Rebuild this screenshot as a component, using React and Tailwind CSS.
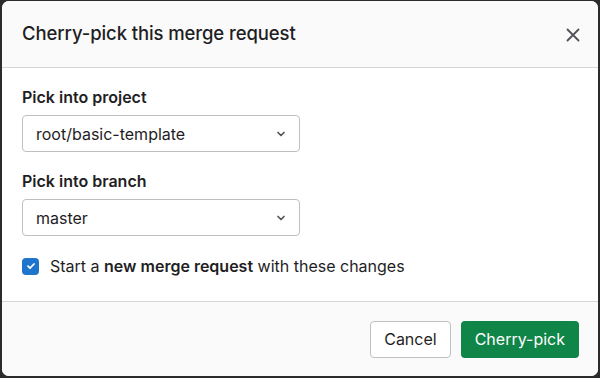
import React from 'react';

const Chevron = () => (
  <svg width="12" height="12" viewBox="0 0 16 16" className="text-[#535158]">
    <path d="M4 6l4 4 4-4" fill="none" stroke="currentColor" strokeWidth="2.2" strokeLinecap="round" strokeLinejoin="round" />
  </svg>
);

const Select = ({ value }) => (
  <div className="flex items-center justify-between w-[278px] h-[37px] border border-[#bfbfc3] rounded-[4px] bg-white pl-[13px] pr-[12px]">
    <span className="text-[16px] text-[#1f1e24]">{value}</span>
    <Chevron />
  </div>
);

const App = () => {
  return (
    <div className="w-[600px] h-[378px] bg-[#2b2b2b] p-[1px_2px_2px_2px]" style={{ fontFamily: 'Inter, "Noto Sans", sans-serif' }}>
      <div className="flex flex-col h-full bg-white rounded-[7px] overflow-hidden">
        <div className="flex items-center justify-between h-[67px] bg-[#fafafa] border-b border-[#d6d6d6] pl-[20px] pr-[18px] shrink-0">
          <h2 className="text-[18.5px] font-medium text-[#1f1e24] tracking-[-0.1px]">Cherry-pick this merge request</h2>
          <svg width="14" height="14" viewBox="0 0 14 14" className="text-[#535158] mt-[2px]">
            <path d="M1.5 1.5l11 11M12.5 1.5l-11 11" stroke="currentColor" strokeWidth="1.8" strokeLinecap="round" />
          </svg>
        </div>
        <div className="flex flex-col px-[20px] pt-[19px] flex-1">
          <label className="text-[16px] font-semibold text-[#1f1e24] leading-[20px] mb-[8px]">Pick into project</label>
          <Select value="root/basic-template" />
          <label className="text-[16px] font-semibold text-[#1f1e24] leading-[20px] mt-[19px] mb-[8px]">Pick into branch</label>
          <Select value="master" />
          <div className="flex items-center mt-[18px]">
            <span className="flex items-center justify-center w-[17px] h-[17px] rounded-[4px] bg-[#1f75cb]">
              <svg width="10" height="10" viewBox="0 0 10 10">
                <path d="M2 5.2l2 2 4-4.2" fill="none" stroke="white" strokeWidth="1.8" strokeLinecap="round" strokeLinejoin="round" />
              </svg>
            </span>
            <span className="ml-[11px] text-[16px] text-[#1f1e24]">
              Start a <b className="font-semibold">new merge request</b> with these changes
            </span>
          </div>
        </div>
        <div className="flex items-center justify-end h-[75px] bg-[#fafafa] border-t border-[#d6d6d6] pr-[19px] gap-[10px] shrink-0">
          <button className="h-[37px] px-[13px] rounded-[4px] border border-[#bfbfc3] bg-white text-[16px] text-[#1f1e24]">Cancel</button>
          <button className="h-[37px] px-[14px] rounded-[4px] bg-[#108548] text-[16px] text-white">Cherry-pick</button>
        </div>
      </div>
    </div>
  );
};

export default App;
